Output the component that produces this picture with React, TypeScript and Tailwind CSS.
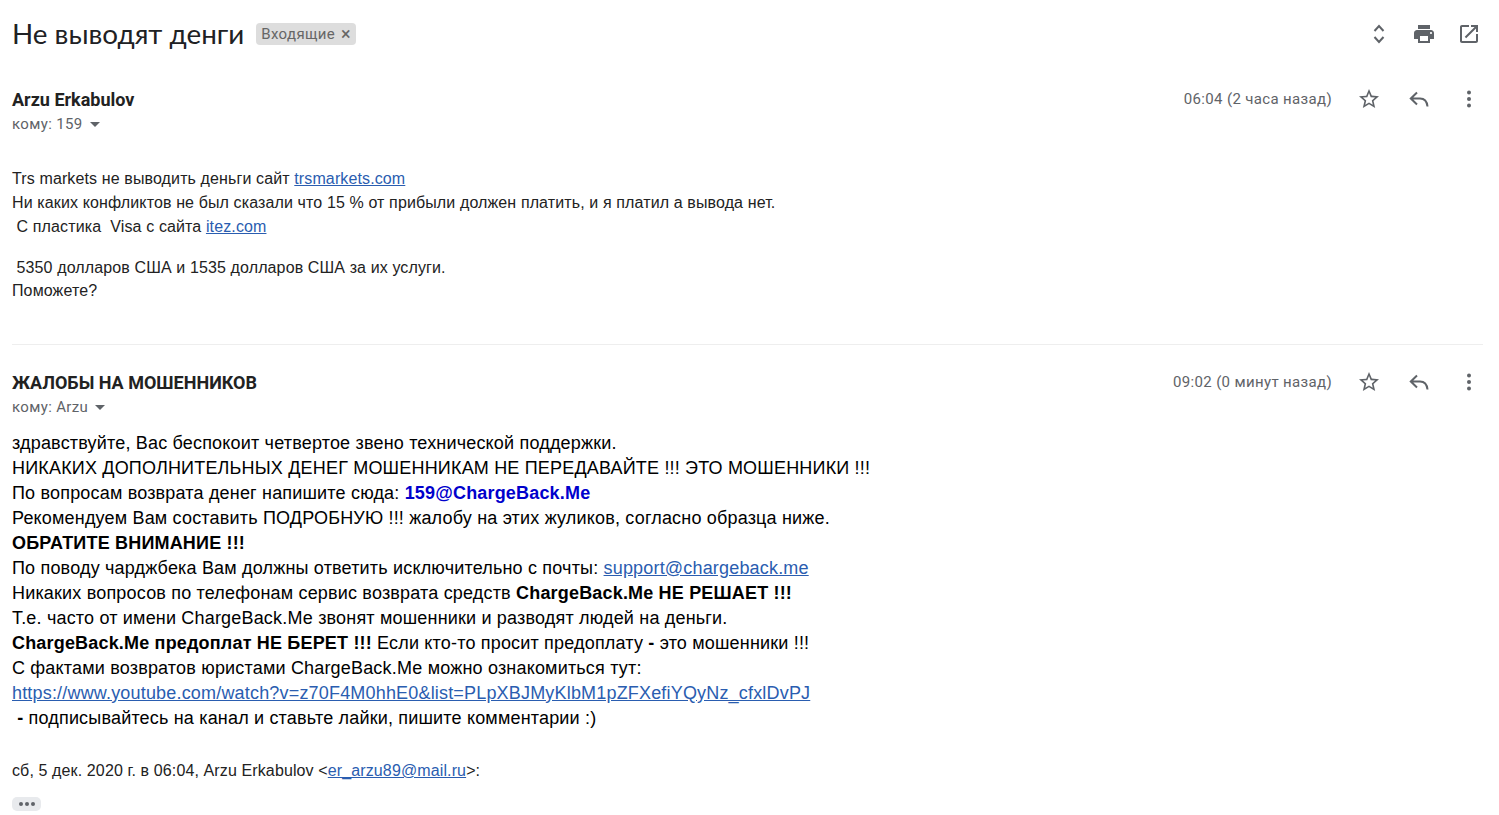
import React from 'react'

const arial = 'font-["Liberation_Sans",Arial,sans-serif]'

function StarIcon() {
    return (
        <svg viewBox="0 0 24 24" className="w-[24px] h-[24px] fill-[#5f6368]">
            <path d="M22 9.240l-7.190-.620L12 2 9.190 8.630 2 9.240l5.460 4.730L5.820 21 12 17.270 18.180 21l-1.630-7.030L22 9.240zM12 15.400l-3.760 2.270 1-4.280-3.320-2.880 4.380-.380L12 6.100l1.710 4.040 4.380.380-3.320 2.880 1 4.280L12 15.400z" />
        </svg>
    )
}

function ReplyIcon() {
    return (
        <svg viewBox="0 0 24 24" className="w-[24px] h-[24px] fill-none stroke-[#5f6368] stroke-2">
            <path d="M10 5.500L3.800 11.500 10 17.500M3.800 11.500H13c4.500 0 7 3 7.500 8" />
        </svg>
    )
}

function DotsIcon() {
    return (
        <svg viewBox="0 0 24 24" className="w-[24px] h-[24px] fill-[#5f6368]">
            <circle cx="12" cy="5.500" r="2" />
            <circle cx="12" cy="12" r="2" />
            <circle cx="12" cy="18.500" r="2" />
        </svg>
    )
}

function MessageHeader({ sender, to, time }: { sender: string; to: string; time: string }) {
    return (
        <div className="flex justify-between items-start">
            <div>
                <div className="font-['Roboto',sans-serif] font-bold text-[18px] leading-[24px] text-[#222]">{sender}</div>
                <div className="flex items-center gap-[7px] font-['Roboto',sans-serif] text-[15px] tracking-[0.35px] leading-[24px] text-[#5f6368]">
                    <span>кому: {to}</span>
                    <span className="w-0 h-0 border-x-[5px] border-x-transparent border-t-[5px] border-t-[#5f6368] mt-[1px]" />
                </div>
            </div>
            <div className="flex items-center -mt-[1px]">
                <span className="font-['Roboto',sans-serif] text-[15px] tracking-[0.35px] leading-[24px] text-[#5f6368] mr-[25px]">{time}</span>
                <div className="flex items-center gap-[26px] mr-[2px]">
                    <StarIcon />
                    <ReplyIcon />
                    <DotsIcon />
                </div>
            </div>
        </div>
    )
}

export default function App() {
    const link = 'text-[#2a5db0] underline'
    return (
        <div className="h-[815px] overflow-hidden bg-white pl-[12px] pr-[16px]">
            {/* Subject */}
            <div className="flex items-center h-[68px] justify-between">
                <div className="flex items-center gap-[12px]">
                    <h1 className="font-['Lato',sans-serif] text-[27.8px] leading-[32px] text-[#202124]">Не выводят денги</h1>
                    <span className="flex items-center gap-[6px] h-[22px] px-[5px] rounded-[4px] bg-[#ddd] font-['Roboto',sans-serif] text-[15px] tracking-[0.35px] text-[#666]">
                        Входящие
                        <span className="text-[18px] leading-none">×</span>
                    </span>
                </div>
                <div className="flex items-center gap-[21px] mr-[2px]">
                    <svg viewBox="0 0 24 24" className="w-[24px] h-[24px] fill-none stroke-[#5f6368] stroke-2">
                        <path d="M7.500 9l4.500-5 4.500 5M7.500 15l4.500 5 4.500-5" />
                    </svg>
                    <svg viewBox="0 0 24 24" className="w-[24px] h-[24px] fill-[#5f6368]">
                        <path d="M19 8H5c-1.660 0-3 1.340-3 3v6h4v4h12v-4h4v-6c0-1.660-1.340-3-3-3zm-3 11H8v-5h8v5zm3-7c-.550 0-1-.450-1-1s.450-1 1-1 1 .450 1 1-.450 1-1 1zm-1-9H6v4h12V3z" />
                    </svg>
                    <svg viewBox="0 0 24 24" className="w-[24px] h-[24px] fill-[#5f6368]">
                        <path d="M19 19H5V5h7V3H5c-1.110 0-2 .900-2 2v14c0 1.100.890 2 2 2h14c1.100 0 2-.900 2-2v-7h-2v7zM14 3v2h3.590l-9.830 9.830 1.410 1.410L19 6.410V10h2V3h-7z" />
                    </svg>
                </div>
            </div>

            {/* First message */}
            <div className="pt-[20px] border-b border-[#eee] h-[277px]">
                <MessageHeader sender="Arzu Erkabulov" to="159" time="06:04 (2 часа назад)" />
                <div className={`${arial} text-[16px] tracking-[0.12px] leading-[24px] text-[#222] mt-[31px]`}>
                    <div>Trs markets не выводить деньги сайт <a className={link}>trsmarkets.com</a></div>
                    <div>Ни каких конфликтов не был сказали что 15 % от прибыли должен платить, и я платил а вывода нет.</div>
                    <div className="whitespace-pre"> С пластика  Visa с сайта <a className={link}>itez.com</a></div>
                    <div className="mt-[17px] whitespace-pre"> 5350 долларов США и 1535 долларов США за их услуги.</div>
                    <div className="leading-[22px]">Поможете?</div>
                </div>
            </div>

            {/* Reply */}
            <div className="pt-[26px]">
                <MessageHeader sender="ЖАЛОБЫ НА МОШЕННИКОВ" to="Arzu" time="09:02 (0 минут назад)" />
                <div className={`${arial} text-[18px] tracking-[0.18px] leading-[25px] text-black mt-[12px]`}>
                    <div>здравствуйте, Вас беспокоит четвертое звено технической поддержки.</div>
                    <div>НИКАКИХ ДОПОЛНИТЕЛЬНЫХ ДЕНЕГ МОШЕННИКАМ НЕ ПЕРЕДАВАЙТЕ !!! ЭТО МОШЕННИКИ !!!</div>
                    <div>По вопросам возврата денег напишите сюда: <b className="text-[#0000cc]">159@ChargeBack.Me</b></div>
                    <div>Рекомендуем Вам составить ПОДРОБНУЮ !!! жалобу на этих жуликов, согласно образца ниже.</div>
                    <div><b>ОБРАТИТЕ ВНИМАНИЕ !!!</b></div>
                    <div>По поводу чарджбека Вам должны ответить исключительно с почты: <a className={link}>support@chargeback.me</a></div>
                    <div>Никаких вопросов по телефонам сервис возврата средств <b>ChargeBack.Me НЕ РЕШАЕТ !!!</b></div>
                    <div>Т.е. часто от имени ChargeBack.Ме звонят мошенники и разводят людей на деньги.</div>
                    <div><b>ChargeBack.Me предоплат НЕ БЕРЕТ !!!</b> Если кто-то просит предоплату <b>-</b> это мошенники !!!</div>
                    <div>С фактами возвратов юристами ChargeBack.Ме можно ознакомиться тут:</div>
                    <div><a className={link}>https://www.youtube.com/watch?v=z70F4M0hhE0&amp;list=PLpXBJMyKlbM1pZFXefiYQyNz_cfxlDvPJ</a></div>
                    <div className="whitespace-pre"> <b>-</b> подписывайтесь на канал и ставьте лайки, пишите комментарии :)</div>
                </div>
                <div className={`${arial} text-[16px] tracking-[0.12px] leading-[24px] text-[#222] mt-[28px]`}>
                    сб, 5 дек. 2020 г. в 06:04, Arzu Erkabulov &lt;<a className={link}>er_arzu89@mail.ru</a>&gt;:
                </div>
                <div className="flex items-center justify-center gap-[2px] w-[29px] h-[14px] rounded-[5px] bg-[#e8eaed] mt-[14px]">
                    <span className="w-[4px] h-[4px] rounded-full bg-[#5f6368]" />
                    <span className="w-[4px] h-[4px] rounded-full bg-[#5f6368]" />
                    <span className="w-[4px] h-[4px] rounded-full bg-[#5f6368]" />
                </div>
            </div>
        </div>
    )
}
